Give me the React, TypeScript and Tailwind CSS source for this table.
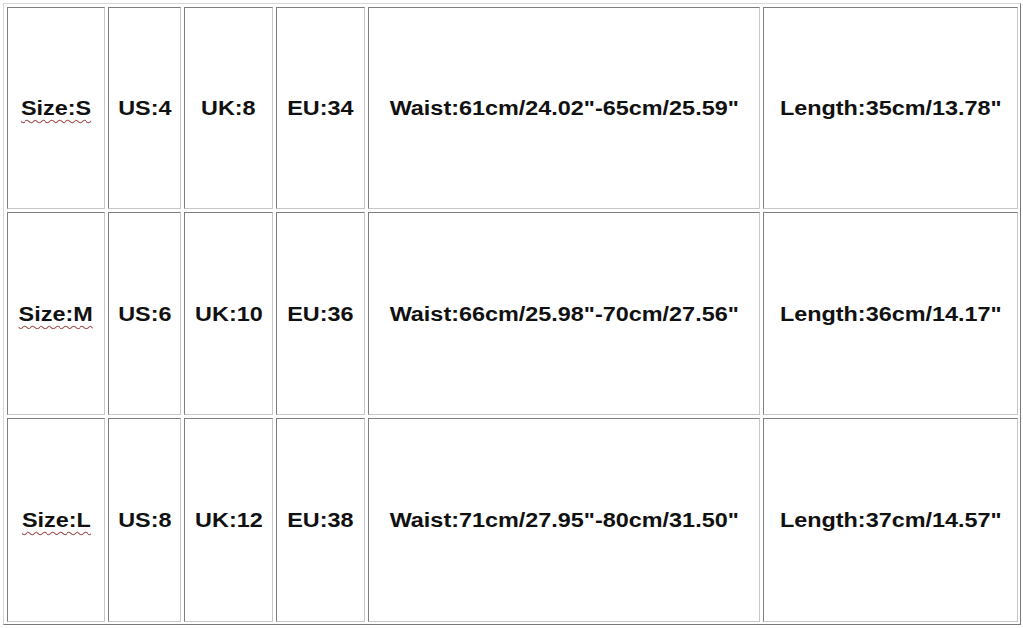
import React from "react";

const rows = [
  ["Size:S", "US:4", "UK:8", "EU:34", 'Waist:61cm/24.02"-65cm/25.59"', 'Length:35cm/13.78"'],
  ["Size:M", "US:6", "UK:10", "EU:36", 'Waist:66cm/25.98"-70cm/27.56"', 'Length:36cm/14.17"'],
  ["Size:L", "US:8", "UK:12", "EU:38", 'Waist:71cm/27.95"-80cm/31.50"', 'Length:37cm/14.57"'],
];

export default function App() {
  return (
    <div
      className="w-[1023px] h-[628px] bg-white pt-[3px] pl-[3px] overflow-hidden"
      style={{ fontFamily: '"Liberation Sans", Arial, sans-serif' }}
    >
      <div className="w-[1018px] h-[622px] border border-t-[#d6d6d6] border-l-[#d6d6d6] border-b-[#7a7a7a] border-r-[#7a7a7a] p-[3px]">
        <div className="grid grid-cols-[98px_73px_89px_89px_392px_255px] grid-rows-[202px_203px_204px] gap-[3px]">
          {rows.map((r, ri) =>
            r.map((t, ci) => (
              <div
                key={ri + "-" + ci}
                className="flex items-center justify-center border border-t-[#7f7f7f] border-l-[#7f7f7f] border-b-[#c8c8c8] border-r-[#c8c8c8] bg-white"
              >
                <span
                  className={
                    "inline-block scale-x-[1.17] text-[20px] font-bold text-[#111] leading-none whitespace-nowrap " +
                    (ci === 0
                      ? "underline decoration-wavy decoration-[#a05050] decoration-1 underline-offset-[4px]"
                      : "")
                  }
                >
                  {t}
                </span>
              </div>
            ))
          )}
        </div>
      </div>
    </div>
  );
}
